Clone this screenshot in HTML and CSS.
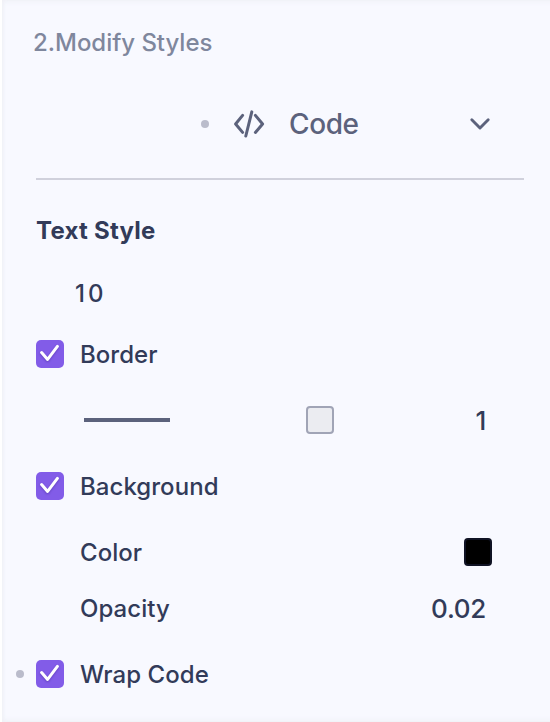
FILE: index.html
```
<!DOCTYPE html>
<html lang="en">
<head>
    <meta charset="UTF-8">
    <title>Modify Styles</title>
    <link rel="stylesheet" href="styles.css">
</head>
<body>

<div class="panel">
    <div class="title"><span>2.Modify Styles</span></div>
    <div class="select">
        <i class="dot"></i>
        <svg class="code-icon" width="32" height="32" viewBox="0 0 32 32">
            <path d="M9.6 7.4 L2.6 16 L9.6 24.4 M22.4 7.4 L29.6 16 L22.4 24.4 M18.8 3.9 L12.8 28"></path>
        </svg>
        <span class="select-name">Code</span>
        <svg class="arrow" width="24" height="24" viewBox="0 0 24 24">
            <path d="M3.8 7.8 L12 16 L20.2 7.8"></path>
        </svg>
    </div>

    <div class="heading"><span>Text Style</span></div>
    <div class="size"><span>10</span></div>

    <div class="row">
        <span class="checkbox"><svg width="28" height="28" viewBox="0 0 28 28"><path d="M5.6 12.6 L11.6 19.4 L21.4 6.4"></path></svg></span>
        <span class="label">Border</span>
    </div>
    <div class="row option border-option">
        <span class="line"></span>
        <span class="swatch light"></span>
        <span class="value">1</span>
    </div>

    <div class="row">
        <span class="checkbox"><svg width="28" height="28" viewBox="0 0 28 28"><path d="M5.6 12.6 L11.6 19.4 L21.4 6.4"></path></svg></span>
        <span class="label">Background</span>
    </div>
    <div class="row option color-option">
        <span class="label">Color</span>
        <span class="swatch black"></span>
    </div>
    <div class="row option opacity-option">
        <span class="label">Opacity</span>
        <span class="value">0.02</span>
    </div>

    <div class="row wrap">
        <i class="dot"></i>
        <span class="checkbox"><svg width="28" height="28" viewBox="0 0 28 28"><path d="M5.6 12.6 L11.6 19.4 L21.4 6.4"></path></svg></span>
        <span class="label">Wrap Code</span>
    </div>
</div>

</body>
</html>
```

FILE: styles.css
```
* {
    box-sizing: border-box;
}

body {
    margin: 0;
    background: #fff;
    font-family: Inter, "Liberation Sans", sans-serif;
    font-size: 24px;
    font-weight: 450;
    line-height: 30px;
    color: #323b59;
}

svg {
    display: block;
    fill: none;
    stroke-linecap: round;
    stroke-linejoin: round;
}

.panel {
    height: 722px;
    margin-right: -10px;
    margin-left: 2px;
    padding: 0 36px 0 34px;
    overflow: hidden;
    background: #f8f9ff;
    box-shadow: inset 3px 0 4px -2px #f0f1f6, inset 0 3px 6px -2px #eeeff5, inset 0 -3px 6px -2px #eeeff5;
}

body {
    overflow: hidden;
}

.title,
.select,
.heading,
.size,
.row {
    display: flex;
    align-items: center;
}

.title {
    height: 86px;
    margin-left: -3px;
    letter-spacing: -.03px;
    color: #7f879d;
}

.dot {
    width: 8px;
    height: 8px;
    border-radius: 50%;
    background: #babccb;
}

.select {
    height: 94px;
    padding: 0 32px 16px 165px;
    border-bottom: 2px solid #d0d1dc;
    font-size: 28px;
    letter-spacing: -.4px;
    color: #5c627c;
}

.code-icon {
    margin-left: 24px;
    stroke: #5c627c;
    stroke-width: 3;
}

.select-name {
    margin-left: 24px;
}

.arrow {
    margin-left: auto;
    stroke: #5c627c;
    stroke-width: 2.9;
}

.heading {
    height: 102px;
    margin-bottom: -20px;
    font-weight: 700;
    letter-spacing: .25px;
}

.size {
    height: 62px;
    padding: 2px 0 0 39px;
    letter-spacing: 3px;
}

.row {
    height: 60px;
}

.checkbox {
    width: 28px;
    height: 28px;
    border-radius: 5px;
    background: #825ce8;
}

.checkbox path {
    stroke: #fff;
    stroke-width: 3;
}

.checkbox svg {
    filter: drop-shadow(0 1px 1px rgba(60, 30, 140, .45));
}

.label {
    margin-left: 16px;
    padding-top: 2px;
    letter-spacing: .05px;
}

.option {
    justify-content: space-between;
    padding: 0 32px 0 28px;
}

.border-option,
.color-option {
    height: 72px;
}

.opacity-option {
    height: 42px;
}

.opacity-option .label,
.opacity-option .value {
    padding-top: 0;
}

.line {
    width: 86px;
    height: 4px;
    margin-left: 20px;
    background: #5c627c;
}

.swatch {
    width: 28px;
    height: 28px;
    border: 2px solid #a0a4b6;
    border-radius: 4px;
}

.light {
    margin-right: 5px;
    background: #ebecf1;
}

.black {
    background: #000;
    border-color: #101324;
}

.value {
    margin-right: 6px;
    padding-top: 1px;
    font-size: 26px;
    letter-spacing: -.3px;
}

.wrap {
    position: relative;
    height: 88px;
}

.wrap .dot {
    position: absolute;
    left: -20px;
}
```
